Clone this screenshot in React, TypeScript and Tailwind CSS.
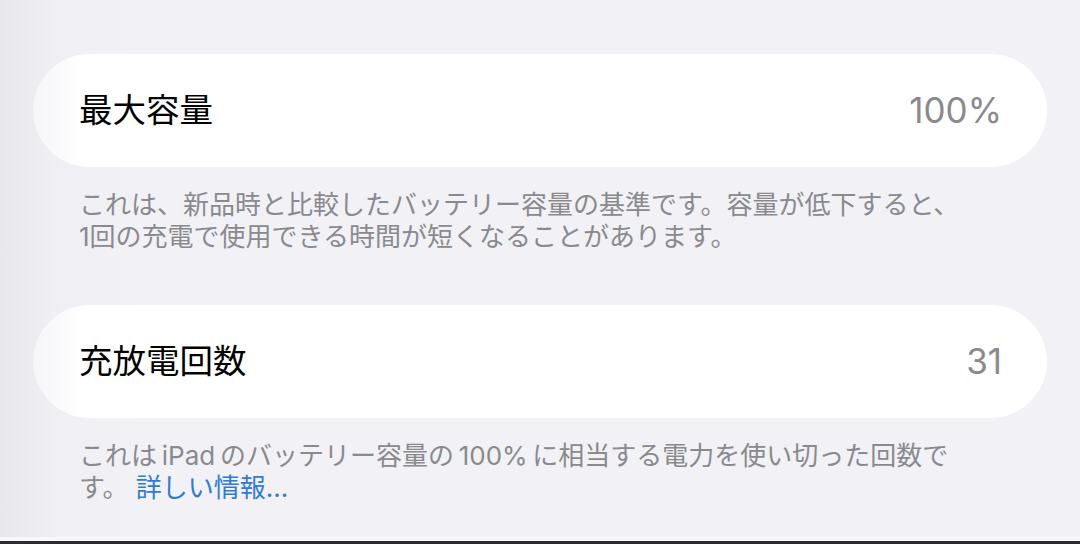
const font = "font-['Inter','Noto_Sans_CJK_JP',sans-serif]";

function Row({ label, value }: { label: string; value: string }) {
  return (
    <div className="flex h-[113px] items-center justify-between rounded-full bg-[linear-gradient(to_right,#f6f6f9_0px,#ffffff_50px)] pl-[46px] pr-[45px]">
      <span className="text-[33.5px] leading-none text-black">{label}</span>
      <span className="text-[35px] leading-none text-[#8a8a8e]">{value}</span>
    </div>
  );
}

export default function App() {
  return (
    <div className={`${font} flex h-[544px] w-[1080px] flex-col overflow-hidden bg-[linear-gradient(to_right,#e7e7ec_0px,#efeff4_60px,#f1f1f6_140px)]`}>
      <div className="flex flex-col px-[33px] pt-[54px]">
        <Row label="最大容量" value="100%" />
        <p className="mt-[22px] whitespace-nowrap pl-[46px] text-[26px] leading-[32px] text-[#8a8a8e]">
          これは、新品時と比較したバッテリー容量の基準です。容量が低下すると、
          <br />
          1回の充電で使用できる時間が短くなることがあります。
        </p>

        <div className="mt-[52px]">
          <Row label="充放電回数" value="31" />
        </div>
        <p className="mt-[22px] whitespace-nowrap pl-[46px] text-[26px] leading-[32px] text-[#8a8a8e]">
          これは{"\u2009"}iPad{"\u2009"}のバッテリー容量の{"\u2009"}100%{"\u2009"}に相当する電力を使い切った回数で
          <br />
          す。 <span className="text-[#2f7cd6]">詳しい情報...</span>
        </p>
      </div>

      <div className="mt-auto h-[4px] bg-[#f8f8fb]" />
      <div className="h-[3px] bg-[#2c2c31]" />
    </div>
  );
}
